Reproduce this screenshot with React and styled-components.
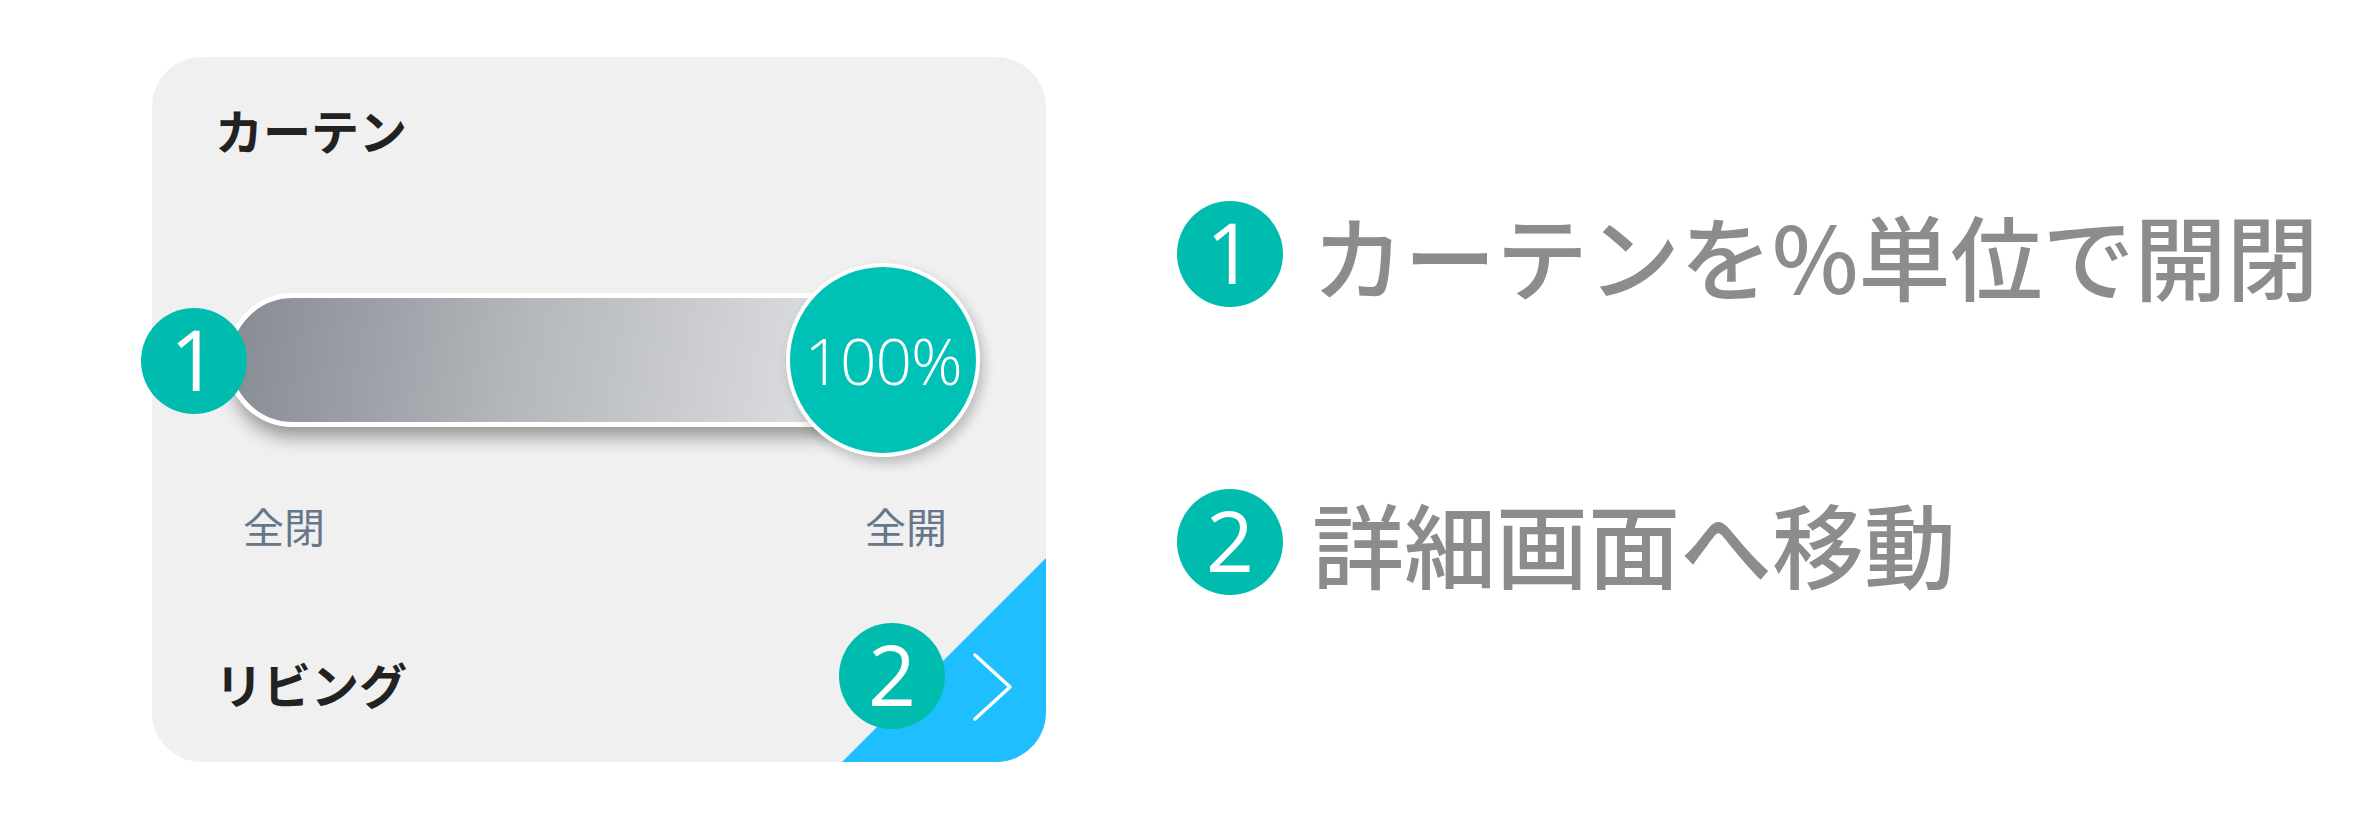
import React from "react";
import styled, { createGlobalStyle } from "styled-components";

const GlobalStyle = createGlobalStyle`
  html, body {
    margin: 0;
    padding: 0;
    background: #ffffff;
  }
  body {
    font-family: "Noto Sans CJK JP", "Noto Sans", sans-serif;
  }
`;

const Page = styled.div`
  display: flex;
  align-items: flex-start;
  padding: 57px 0 0 152px;
  width: 2366px;
  height: 828px;
  box-sizing: border-box;
`;

const Card = styled.div`
  position: relative;
  display: flex;
  flex-direction: column;
  width: 894px;
  height: 705px;
  box-sizing: border-box;
  padding: 40px 66px 0 63px;
  background: #f0f0f0;
  border-radius: 50px;
`;

const Title = styled.div`
  font-size: 48px;
  line-height: 64px;
  font-weight: 700;
  color: #222222;
  margin-top: ${(p) => p.$top || 0}px;
`;

const Slider = styled.div`
  position: relative;
  display: flex;
  align-items: center;
  margin: 102px 0 0 11px;
  height: 194px;
`;

const Track = styled.div`
  width: calc(100% - 97px);
  height: 134px;
  box-sizing: border-box;
  border: 5px solid #ffffff;
  border-radius: 67px;
  background: linear-gradient(100deg, #868a93 0%, #b4b7bb 45%, #e4e5e7 100%);
  box-shadow: 0 16px 18px -6px rgba(0, 0, 0, 0.38);
`;

const Knob = styled.div`
  position: absolute;
  top: 0;
  width: 194px;
  height: 194px;
  box-sizing: border-box;
  border: 4px solid #ffffff;
  border-radius: 50%;
  background: #00c1b5;
  box-shadow: 4px 6px 12px rgba(0, 0, 0, 0.22);
  display: flex;
  align-items: center;
  justify-content: center;
  color: #ffffff;
  font-family: "Open Sans", "Noto Sans", sans-serif;
  font-weight: 300;
  font-size: 64px;
  letter-spacing: -1px;
`;

const Labels = styled.div`
  display: flex;
  justify-content: space-between;
  margin: 40px 33px 0 28px;
  font-size: 41px;
  line-height: 56px;
  color: #657789;
`;

const Badge = styled.div`
  width: 106px;
  height: 106px;
  flex: none;
  border-radius: 50%;
  background: #00bcae;
  display: flex;
  align-items: center;
  justify-content: center;
  color: #ffffff;
  font-family: "Open Sans", "Noto Sans", sans-serif;
  font-weight: 400;
  font-size: 84px;
  line-height: 1;
  padding-bottom: 4px;
  box-sizing: border-box;
`;

const PinnedBadge = styled(Badge)`
  position: absolute;
  left: ${(p) => p.$x}px;
  top: ${(p) => p.$y}px;
  z-index: 2;
`;

const Corner = styled.div`
  position: absolute;
  right: 0;
  bottom: 0;
  width: 204px;
  height: 204px;
  box-sizing: border-box;
  background: #1ebeff;
  border-bottom-right-radius: 50px;
  clip-path: polygon(100% 0, 100% 100%, 0 100%);
  display: flex;
  align-items: flex-end;
  justify-content: flex-end;
  padding: 0 31px 38px 0;
`;

const Notes = styled.div`
  display: flex;
  flex-direction: column;
  gap: 182px;
  margin: 144px 0 0 131px;
`;

const Note = styled.div`
  display: flex;
  align-items: center;
  gap: 29px;
`;

const NoteText = styled.div`
  font-size: 92px;
  line-height: 106px;
  font-weight: 500;
  color: #8c8c8c;
  white-space: nowrap;
`;

const Chevron = () => (
  <svg width="44" height="72" viewBox="0 0 44 72">
    <polyline
      points="4,3 39,35 4,67"
      fill="none"
      stroke="#ffffff"
      strokeWidth="3.5"
      strokeLinecap="round"
      strokeLinejoin="round"
    />
  </svg>
);

const value = 100;

export default function App() {
  return (
    <>
      <GlobalStyle />
      <Page>
        <Card>
          <Title>カーテン</Title>
          <Slider>
            <Track />
            <Knob style={{ left: `calc((100% - 194px) * ${value / 100})` }}>
              {value}%
            </Knob>
          </Slider>
          <Labels>
            <span>全閉</span>
            <span>全開</span>
          </Labels>
          <Title $top={98}>リビング</Title>
          <Corner>
            <Chevron />
          </Corner>
          <PinnedBadge $x={-11} $y={251}>1</PinnedBadge>
          <PinnedBadge $x={687} $y={566}>2</PinnedBadge>
        </Card>
        <Notes>
          <Note>
            <Badge>1</Badge>
            <NoteText>カーテンを%単位で開閉</NoteText>
          </Note>
          <Note>
            <Badge>2</Badge>
            <NoteText>詳細画面へ移動</NoteText>
          </Note>
        </Notes>
      </Page>
    </>
  );
}
